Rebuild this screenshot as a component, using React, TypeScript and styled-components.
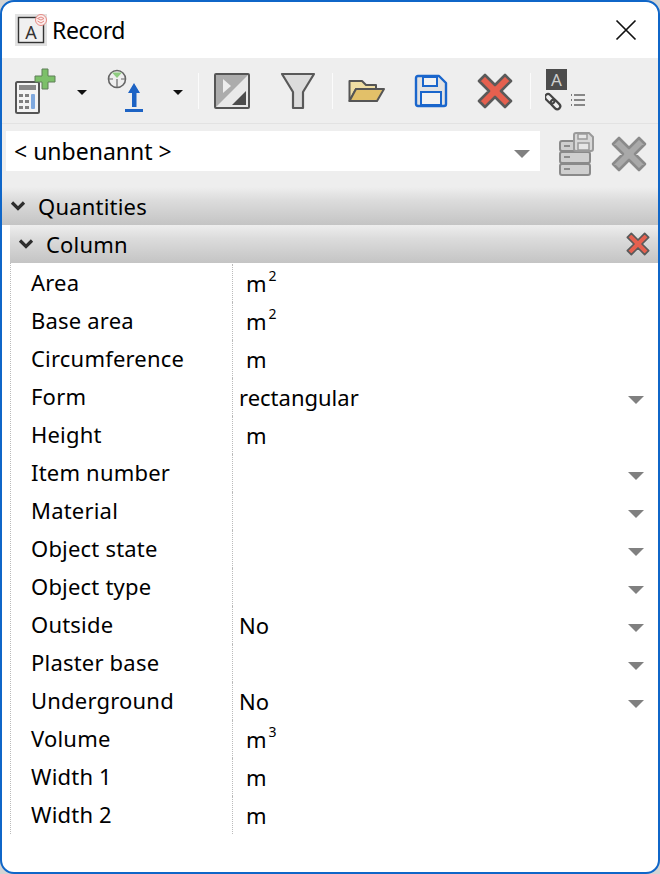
import { createGlobalStyle } from "styled-components"
import styled from "styled-components"

const GlobalStyle = createGlobalStyle`
    html, body {
        margin: 0;
        padding: 0;
        background: #d4d4d4;
    }
`

const Window = styled.div`
    box-sizing: border-box;
    width: 660px;
    height: 874px;
    display: flex;
    flex-direction: column;
    background: #fff;
    border: 2px solid #0f66c8;
    border-radius: 14px;
    overflow: hidden;
    font-family: "Noto Sans", sans-serif;
    font-size: 22px;
    color: #000;
`

const TitleBar = styled.div`
    height: 56px;
    flex: none;
    display: flex;
    align-items: center;
    padding: 0 21px 0 13px;
    gap: 5px;
`

const Title = styled.span`
    flex: 1;
    font-size: 23px;
    letter-spacing: -0.4px;
    line-height: 1;
`

const Toolbar = styled.div`
    height: 66px;
    flex: none;
    box-sizing: border-box;
    display: flex;
    align-items: center;
    background: #eeeeee;
    border-bottom: 1px solid #e2e2e2;
    padding-left: 12px;
`

const ToolIcon = styled.div<{ $w: number; $mr?: number }>`
    width: ${p => p.$w}px;
    height: 50px;
    flex: none;
    margin-right: ${p => p.$mr ?? 0}px;
    display: flex;
    align-items: center;
    justify-content: center;
`

const Separator = styled.div<{ $mr: number }>`
    width: 1px;
    height: 36px;
    flex: none;
    background: #fbfbfb;
    margin-right: ${p => p.$mr}px;
`

const ChooserRow = styled.div`
    height: 63px;
    flex: none;
    box-sizing: border-box;
    display: flex;
    align-items: flex-start;
    background: #eeeeee;
    padding: 7px 0 0 4px;
`

const Combo = styled.div`
    width: 534px;
    height: 40px;
    flex: none;
    box-sizing: border-box;
    display: flex;
    align-items: center;
    justify-content: space-between;
    background: #fff;
    padding: 0 10px 0 8px;
    font-size: 23px;
`

const SectionBar = styled.div`
    height: 38px;
    flex: none;
    box-sizing: border-box;
    display: flex;
    align-items: center;
    gap: 12px;
    padding-left: 8px;
    background: linear-gradient(#eeeeee 0%, #dcdcdc 35%, #c4c4c4 100%);
`

const SubSection = styled(SectionBar)`
    margin-left: 8px;
    padding: 0 8px 0 8px;
    justify-content: flex-start;
`

const BarLabel = styled.span`
    flex: 1;
    letter-spacing: 0.2px;
`

const Rows = styled.div`
    margin-left: 8px;
    padding-top: 1px;
    border-left: 1px dotted #bbbbbb;
    display: flex;
    flex-direction: column;
`

const Row = styled.div`
    height: 38px;
    display: grid;
    grid-template-columns: 222px 1fr;
`

const Label = styled.div`
    box-sizing: border-box;
    display: flex;
    align-items: center;
    padding: 0 0 2px 20px;
    border-right: 1px dotted #bbbbbb;
    letter-spacing: 0.2px;
`

const Value = styled.div<{ $unit: boolean }>`
    display: flex;
    align-items: center;
    justify-content: space-between;
    padding: 0 14px 0 ${p => (p.$unit ? 13 : 6)}px;
`

const Sup = styled.sup`
    font-size: 14px;
    line-height: 0;
    position: relative;
    top: -3px;
    margin-left: 2px;
`

const Arrow = styled.span`
    width: 0;
    height: 0;
    flex: none;
    border-left: 8px solid transparent;
    border-right: 8px solid transparent;
    border-top: 8px solid #808080;
    margin-top: 6px;
`

const SmallArrow = styled.span<{ $ml: number; $mr: number }>`
    width: 0;
    height: 0;
    flex: none;
    margin: 4px ${p => p.$mr}px 0 ${p => p.$ml}px;
    border-left: 5px solid transparent;
    border-right: 5px solid transparent;
    border-top: 5px solid #111;
`

function Chevron() {
    return (
        <svg width="16" height="12" viewBox="0 0 16 12">
            <path d="M2 2.5 L8 8.5 L14 2.5" fill="none" stroke="#2e2e2e" strokeWidth="3.2" />
        </svg>
    )
}

function RedCross({ size, fill = "#e5604f", stroke = "#5a5a5a" }: { size: number; fill?: string; stroke?: string }) {
    return (
        <svg width={size} height={size} viewBox="0 0 36 36">
            <path
                d="M8 2 L18 12 L28 2 L34 8 L24 18 L34 28 L28 34 L18 24 L8 34 L2 28 L12 18 L2 8 Z"
                fill={fill}
                stroke={stroke}
                strokeWidth="2.6"
                strokeLinejoin="round"
            />
        </svg>
    )
}

function DocIcon() {
    return (
        <svg width="32" height="32" viewBox="0 0 32 32">
            <rect x="0" y="0" width="32" height="32" fill="#e2e2e2" />
            <rect x="3.5" y="3.5" width="25" height="25" fill="#f0f0f0" stroke="#333" strokeWidth="1.4" />
            <text x="16" y="25" textAnchor="middle" fontSize="18" fontFamily="Noto Sans, sans-serif" fill="#333">A</text>
            <circle cx="26" cy="6" r="5.5" fill="#fbeeee" stroke="#e58b84" strokeWidth="1" />
            <path d="M22.5 4.5 L26 3 L29 4.5 L26 6 Z M22.5 7 L26 9 L29 7" fill="none" stroke="#e58b84" strokeWidth="1" />
        </svg>
    )
}

function CalcAddIcon() {
    return (
        <svg width="42" height="46" viewBox="0 0 42 46">
            <rect x="1" y="14" width="23" height="31" rx="1.5" fill="#f4f4f4" stroke="#555" strokeWidth="2" />
            <rect x="4" y="17" width="17" height="5" fill="#888" />
            {[26, 32, 38].map(y => [4, 10].map(x => <rect key={`${x}-${y}`} x={x} y={y} width="4" height="3" fill="#808080" />))}
            <rect x="16" y="26" width="4" height="15" rx="1" fill="#7fa9df" />
            <path d="M27 1 H33 V8 H40 V14 H33 V21 H27 V14 H20 V8 H27 Z" fill="#7cc069" stroke="#5f7f58" strokeWidth="1" />
        </svg>
    )
}

function StampIcon() {
    return (
        <svg width="38" height="44" viewBox="0 0 38 44">
            <circle cx="10" cy="10" r="8.5" fill="#eeeeee" stroke="#666" strokeWidth="1.6" />
            <path d="M5 3.5 H15 L10 9 Z" fill="#8ecb80" />
            <path d="M10 10 V18 M1.5 10 H6 M14 10 H18.5" stroke="#666" strokeWidth="1.2" />
            <path d="M27 14 L33 24 H29.5 V38 H25 V24 H21 Z" fill="#1d63c4" />
            <rect x="18" y="40" width="18" height="3" fill="#1d63c4" />
        </svg>
    )
}

function FrameIcon() {
    return (
        <svg width="36" height="36" viewBox="0 0 36 36">
            <rect x="1" y="1" width="34" height="34" rx="1" fill="#e9e9e9" stroke="#555" strokeWidth="2" />
            <path d="M2 2 H34 L2 34 Z" fill="#acacac" />
            <path d="M9 6 L17 13 L9 20 Z" fill="#eeeeee" />
            <path d="M32 18 V32 H18 Z" fill="#4d4d4d" />
        </svg>
    )
}

function FunnelIcon() {
    return (
        <svg width="36" height="38" viewBox="0 0 36 38">
            <path d="M2 2 H34 L23 20 V36 H13 V20 Z" fill="#dcdcdc" stroke="#595959" strokeWidth="2.2" strokeLinejoin="round" />
        </svg>
    )
}

function FolderIcon() {
    return (
        <svg width="38" height="24" viewBox="0 0 38 24">
            <path d="M1.5 22 V2 H14 L18 6 H28 V10 H8 L1.5 22 Z" fill="#efdea4" stroke="#555" strokeWidth="2" strokeLinejoin="round" />
            <path d="M1.5 22 L8 10 H36 L29 22 Z" fill="#e2c069" stroke="#555" strokeWidth="2" strokeLinejoin="round" />
        </svg>
    )
}

function SaveIcon() {
    return (
        <svg width="34" height="34" viewBox="0 0 34 34">
            <path d="M2 4 Q2 2 4 2 H25 L32 9 V30 Q32 32 30 32 H4 Q2 32 2 30 Z" fill="#e2e2e2" stroke="#1a66cc" strokeWidth="2.4" strokeLinejoin="round" />
            <rect x="9" y="3" width="14" height="9" fill="#f2f2f2" stroke="#1a66cc" strokeWidth="2" />
            <rect x="7" y="18" width="20" height="13" fill="#f2f2f2" stroke="#1a66cc" strokeWidth="2" />
        </svg>
    )
}

function TextLinkIcon() {
    return (
        <svg width="42" height="44" viewBox="0 0 42 44">
            <rect x="1" y="0" width="21" height="21" fill="#4c4c4c" />
            <text x="11.5" y="17" textAnchor="middle" fontSize="17" fontFamily="Noto Sans, sans-serif" fill="#cfcfcf">A</text>
            <g fill="none" stroke="#444" strokeWidth="2.2" transform="rotate(45 8 33)">
                <rect x="-2" y="30" width="11" height="6" rx="3" />
                <rect x="6" y="30" width="11" height="6" rx="3" />
            </g>
            <path d="M29 26 H40 M29 31 H40 M29 36 H40" stroke="#666" strokeWidth="1.6" />
            <path d="M26 26 H27 M26 31 H27 M26 36 H27" stroke="#555" strokeWidth="1.6" />
        </svg>
    )
}

function StoreIcon() {
    return (
        <svg width="36" height="44" viewBox="0 0 36 44">
            <g fill="#cfcfcf" stroke="#8a8a8a" strokeWidth="2">
                <rect x="2" y="9" width="30" height="10" rx="2" />
                <rect x="2" y="20" width="30" height="11" rx="2" />
                <rect x="2" y="32" width="30" height="11" rx="2" />
            </g>
            <path d="M6 14 H12 M6 25 H12 M6 37 H12" stroke="#777" strokeWidth="1.6" />
            <path d="M16 3 Q16 1 18 1 H31 L35 5 V17 Q35 19 33 19 H18 Q16 19 16 17 Z" fill="#d8d8d8" stroke="#9a9a9a" strokeWidth="2" />
            <rect x="20" y="2" width="9" height="5" fill="#e6e6e6" stroke="#9a9a9a" strokeWidth="1.5" />
            <rect x="20" y="11" width="11" height="7" fill="#e6e6e6" stroke="#9a9a9a" strokeWidth="1.5" />
        </svg>
    )
}

const RightIcons = styled.div`
    display: flex;
    align-items: center;
    gap: 17px;
    margin: 1px 0 0 18px;
`

const CloseButton = styled.svg`
    flex: none;
`

type Field = { name: string; value?: string; unit?: string; sup?: string; list?: boolean }

const fields: Field[] = [
    { name: "Area", unit: "m", sup: "2" },
    { name: "Base area", unit: "m", sup: "2" },
    { name: "Circumference", unit: "m" },
    { name: "Form", value: "rectangular", list: true },
    { name: "Height", unit: "m" },
    { name: "Item number", list: true },
    { name: "Material", list: true },
    { name: "Object state", list: true },
    { name: "Object type", list: true },
    { name: "Outside", value: "No", list: true },
    { name: "Plaster base", list: true },
    { name: "Underground", value: "No", list: true },
    { name: "Volume", unit: "m", sup: "3" },
    { name: "Width 1", unit: "m" },
    { name: "Width 2", unit: "m" },
]

export default function App() {
    return (
        <Window>
            <GlobalStyle />
            <TitleBar>
                <DocIcon />
                <Title>Record</Title>
                <CloseButton width="22" height="22" viewBox="0 0 22 22">
                    <path d="M1.5 1.5 L20.5 20.5 M20.5 1.5 L1.5 20.5" stroke="#111" strokeWidth="1.7" />
                </CloseButton>
            </TitleBar>
            <Toolbar>
                <ToolIcon $w={44}><CalcAddIcon /></ToolIcon>
                <SmallArrow $ml={19} $mr={20} />
                <ToolIcon $w={38}><StampIcon /></ToolIcon>
                <SmallArrow $ml={28} $mr={15} />
                <Separator $mr={15} />
                <ToolIcon $w={36} $mr={30}><FrameIcon /></ToolIcon>
                <ToolIcon $w={36} $mr={16}><FunnelIcon /></ToolIcon>
                <Separator $mr={15} />
                <ToolIcon $w={38} $mr={28}><FolderIcon /></ToolIcon>
                <ToolIcon $w={34} $mr={29}><SaveIcon /></ToolIcon>
                <ToolIcon $w={36} $mr={17}><RedCross size={36} /></ToolIcon>
                <Separator $mr={14} />
                <ToolIcon $w={42}><TextLinkIcon /></ToolIcon>
            </Toolbar>
            <ChooserRow>
                <Combo>
                    <span>&lt; unbenannt &gt;</span>
                    <Arrow />
                </Combo>
                <RightIcons>
                    <StoreIcon />
                    <RedCross size={36} fill="#a9a9a9" stroke="#8a8a8a" />
                </RightIcons>
            </ChooserRow>
            <SectionBar>
                <Chevron />
                <BarLabel>Quantities</BarLabel>
            </SectionBar>
            <SubSection>
                <Chevron />
                <BarLabel>Column</BarLabel>
                <RedCross size={24} />
            </SubSection>
            <Rows>
                {fields.map(f => (
                    <Row key={f.name}>
                        <Label>{f.name}</Label>
                        <Value $unit={!!f.unit}>
                            <span>
                                {f.value ?? f.unit}
                                {f.sup && <Sup>{f.sup}</Sup>}
                            </span>
                            {f.list && <Arrow />}
                        </Value>
                    </Row>
                ))}
            </Rows>
        </Window>
    )
}
